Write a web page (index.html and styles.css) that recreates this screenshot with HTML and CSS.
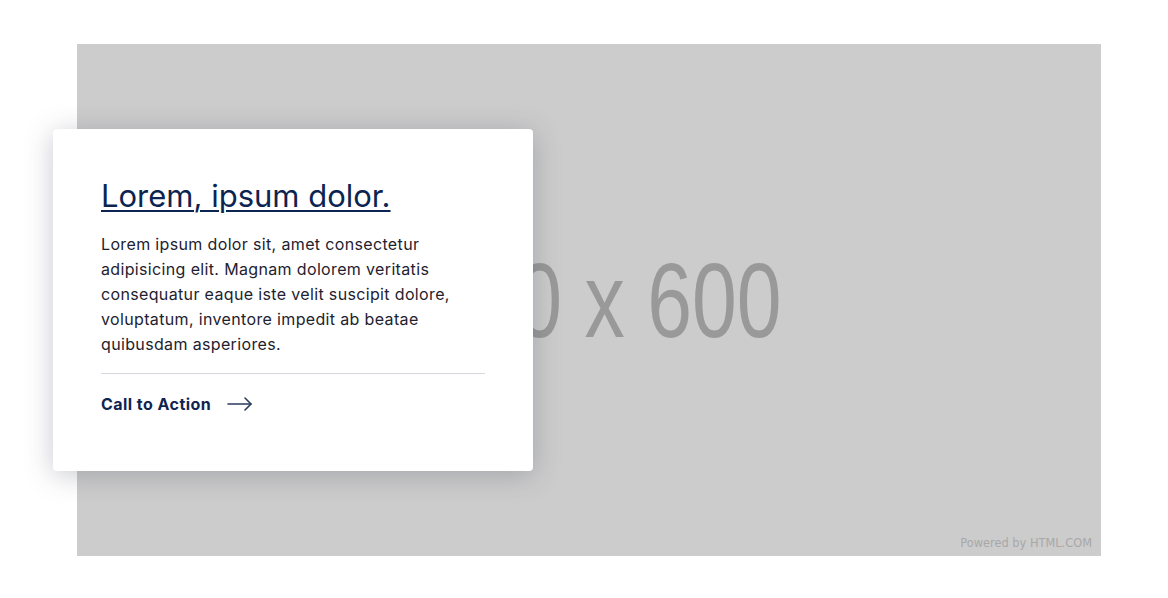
FILE: index.html
```html
<!DOCTYPE html>
<html lang="en">
<head>
  <meta charset="UTF-8" />
  <meta name="viewport" content="width=device-width, initial-scale=1" />
  <title>Card over image</title>
  <link rel="stylesheet" href="styles.css">
</head>
<body>
  <section class="hero">
    <div class="placeholder">
      <span class="placeholder-text">1200 x 600</span>
      <span class="powered">Powered by HTML.COM</span>
    </div>

    <div class="card">
      <h2 class="card-title"><a href="#">Lorem, ipsum dolor.</a></h2>
      <p class="card-text">
        Lorem ipsum dolor sit, amet consectetur adipisicing elit. Magnam dolorem veritatis
        consequatur eaque iste velit suscipit dolore, voluptatum, inventore impedit ab beatae
        quibusdam asperiores.
      </p>
      <a class="cta" href="#">
        Call to Action
        <svg width="26" height="14" viewBox="0 0 26 14" fill="none" stroke="currentColor" stroke-width="1.6" stroke-linecap="round" stroke-linejoin="round">
          <path d="M1 7h23" />
          <path d="M18 1l6 6-6 6" />
        </svg>
      </a>
    </div>
  </section>
</body>
</html>
```

FILE: styles.css
```css
* {
  box-sizing: border-box;
}
body {
  margin: 0;
  background: #fff;
  font-family: 'Inter', 'Noto Sans', sans-serif;
}
.hero {
  display: grid;
  width: 1024px;
  margin: 44px 0 0 77px;
}
.placeholder,
.card {
  grid-area: 1 / 1;
}
.placeholder {
  height: 512px;
  background: #cccccc;
  display: flex;
  align-items: center;
  justify-content: center;
  position: relative;
}
.placeholder-text {
  font-family: 'Liberation Sans', Arial, sans-serif;
  font-size: 106px;
  color: #999999;
  white-space: nowrap;
  transform: translateX(-7px) scaleX(0.76);
}
.powered {
  position: absolute;
  right: 9px;
  bottom: 6px;
  font-family: 'DejaVu Sans', sans-serif;
  font-size: 11.4px;
  color: #a8a8a8;
}
.card {
  position: relative;
  z-index: 1;
  align-self: center;
  justify-self: start;
  width: 480px;
  margin-left: -24px;
  padding: 47px 48px 55px;
  background: #fff;
  border-radius: 4px;
  box-shadow: 0 4px 28px rgba(60, 66, 87, 0.28);
}
.card-title {
  margin: 0 0 16px;
  font-size: 31px;
  font-weight: 400;
  line-height: 40px;
}
.card-title a {
  color: #0c2451;
  text-decoration: underline;
  text-decoration-thickness: 2px;
  text-underline-offset: 3px;
}
.card-text {
  margin: 0;
  padding-bottom: 16px;
  border-bottom: 1px solid #d5d8de;
  font-size: 16px;
  line-height: 25px;
  letter-spacing: 0.35px;
  color: #1e2230;
}
.cta {
  display: flex;
  align-items: center;
  gap: 16px;
  margin-top: 18px;
  font-size: 16px;
  line-height: 24px;
  font-weight: 700;
  letter-spacing: 0.45px;
  color: #0f2350;
  text-decoration: none;
}
.cta svg {
  color: #2b3a5e;
}
```
